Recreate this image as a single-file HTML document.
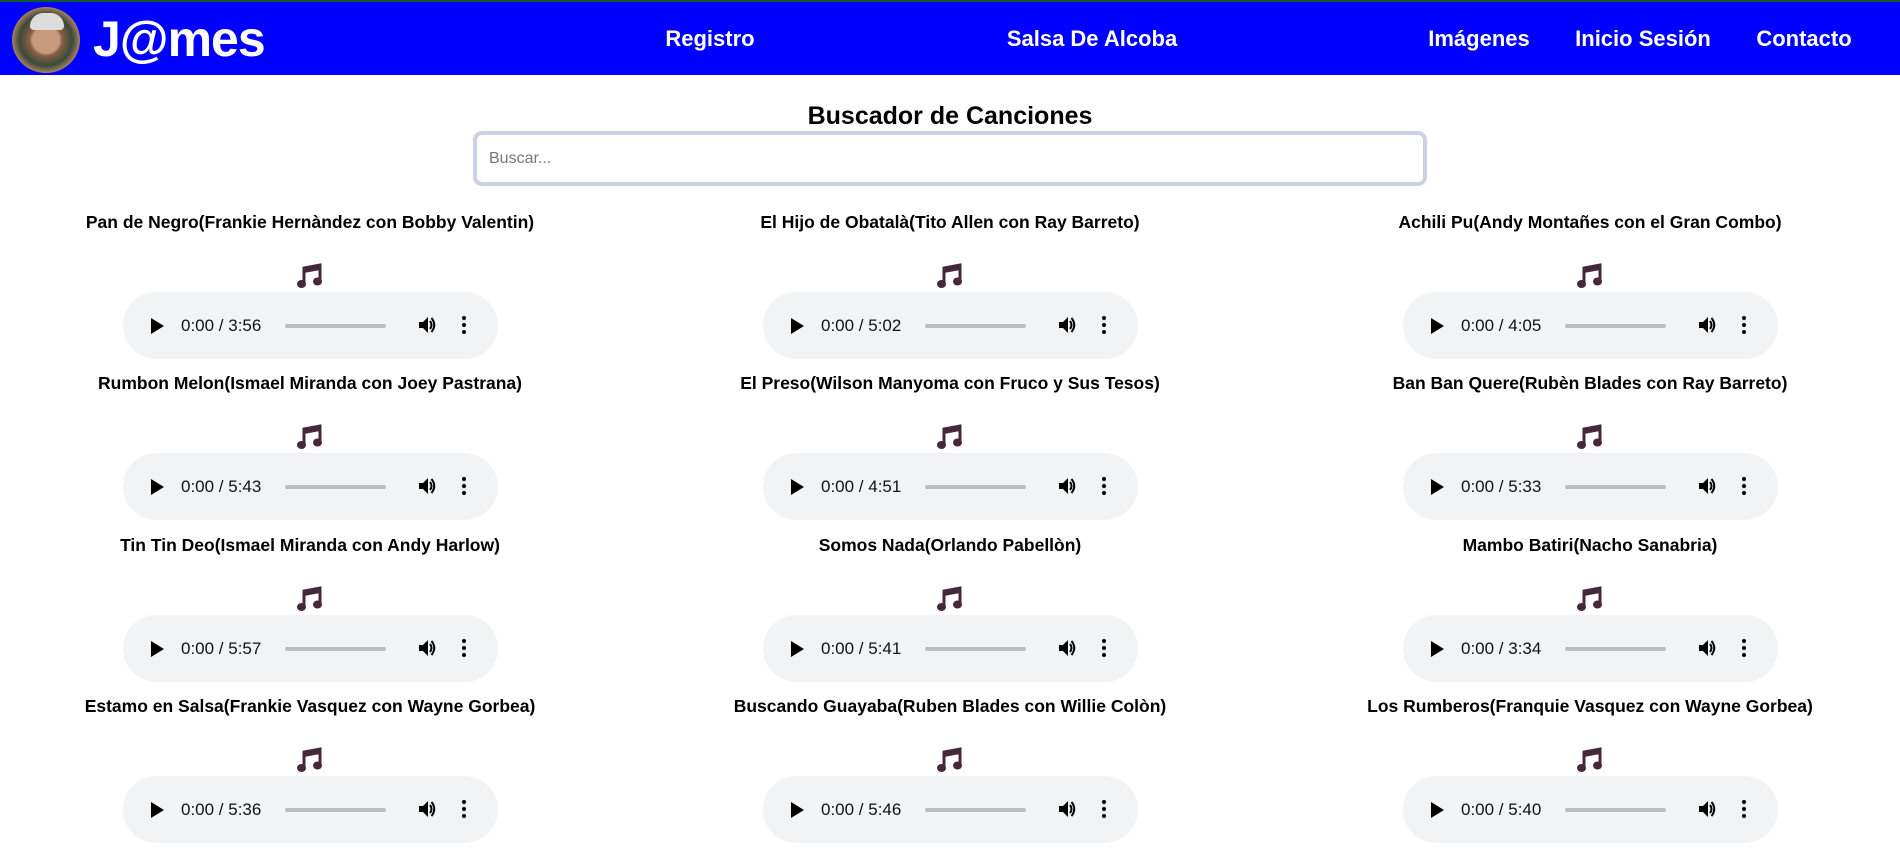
<!DOCTYPE html>
<html><head><meta charset="utf-8">
<style>
*{margin:0;padding:0;box-sizing:border-box}
body{width:1900px;height:854px;overflow:hidden;background:#fff;font-family:"Liberation Sans",Arial,sans-serif;position:relative}
.hdr{position:absolute;left:0;top:0;width:1900px;height:75px;background:#0000ff;border-top:2px solid #0a5a2a}
.av{position:absolute;left:12px;top:5px;width:68px;height:66px;border-radius:50%;background:radial-gradient(ellipse at 50% 50%,#c79a7e 0 28%,#8a5e45 34%,#3a4a3a 55%,#b08660 72%);overflow:hidden}
.av:before{content:"";position:absolute;left:18px;top:6px;width:34px;height:17px;border-radius:14px 14px 4px 4px;background:#ddd}
.logo{position:absolute;left:93px;top:8px;color:#fff;font-weight:bold;font-size:50px;letter-spacing:-1px}
.nav{position:absolute;top:24px;color:#fff;font-weight:bold;font-size:22px;transform:translateX(-50%);white-space:nowrap}
h1{position:absolute;top:102px;left:0;width:1900px;text-align:center;font-size:25px;font-weight:bold;color:#000}
.sb{position:absolute;left:473px;top:131px;width:954px;height:55px;border:4px solid #cdd1e4;border-radius:9px;font-size:16px;color:#777;padding:15px 12px}
.card{position:absolute;width:640px;margin-left:-320px;text-align:center}
.t{font-size:17.5px;font-weight:bold;color:#000;height:20px;white-space:nowrap}
.note{position:absolute;left:307px;top:51px}
.au{position:absolute;top:80px;width:375px;height:67px;border-radius:34px;background:#f1f3f4}
.au .pl{position:absolute;left:28px;top:26px;width:0;height:0;border-left:13px solid #000;border-top:8px solid transparent;border-bottom:8px solid transparent}
.au .tm{position:absolute;left:58px;top:24px;font-size:17px;color:#111}
.au .bar{position:absolute;left:162px;top:32px;width:101px;height:4px;background:#bdbdbd;border-radius:2px}
.au .vol{position:absolute;left:294px;top:23px}
.au .dt{position:absolute;left:339px;top:24px;width:4px}
.au .dt i{display:block;width:4px;height:4px;border-radius:50%;background:#000;margin-bottom:3px}
</style></head><body>
<div class="hdr">
<div class="av"></div>
<div class="logo">J@mes</div>
<div class="nav" style="left:710px">Registro</div>
<div class="nav" style="left:1092px">Salsa De Alcoba</div>
<div class="nav" style="left:1479px">Imágenes</div>
<div class="nav" style="left:1643px">Inicio Sesión</div>
<div class="nav" style="left:1804px">Contacto</div>
</div>
<h1>Buscador de Canciones</h1>
<div class="sb">Buscar...</div>

<div id="c"></div>
<script>
var songs=[
["Pan de Negro(Frankie Hernàndez con Bobby Valentin)","3:56"],
["El Hijo de Obatalà(Tito Allen con Ray Barreto)","5:02"],
["Achili Pu(Andy Montañes con el Gran Combo)","4:05"],
["Rumbon Melon(Ismael Miranda con Joey Pastrana)","5:43"],
["El Preso(Wilson Manyoma con Fruco y Sus Tesos)","4:51"],
["Ban Ban Quere(Rubèn Blades con Ray Barreto)","5:33"],
["Tin Tin Deo(Ismael Miranda con Andy Harlow)","5:57"],
["Somos Nada(Orlando Pabellòn)","5:41"],
["Mambo Batiri(Nacho Sanabria)","3:34"],
["Estamo en Salsa(Frankie Vasquez con Wayne Gorbea)","5:36"],
["Buscando Guayaba(Ruben Blades con Willie Colòn)","5:46"],
["Los Rumberos(Franquie Vasquez con Wayne Gorbea)","5:40"]];
var cx=[310,950,1590],ty=[212,373,535,696],h="";
var note='<svg class="note" width="26" height="26" viewBox="0 0 26 26"><path d="M7 21 V5 L23 2 V18" stroke="#45283a" stroke-width="3" fill="none"/><path d="M7 5 L23 2 V7 L7 10 Z" fill="#45283a"/><ellipse cx="4.5" cy="21" rx="4.5" ry="4" fill="#45283a"/><ellipse cx="20.5" cy="18.5" rx="4.5" ry="4" fill="#45283a"/></svg>';
var vol='<svg width="20" height="20" viewBox="0 0 20 20"><path d="M2 7 H6 L11 2 V18 L6 13 H2 Z" fill="#000"/><path d="M13 6 Q16 10 13 14" stroke="#000" stroke-width="2" fill="none"/><path d="M14.5 3 Q20 10 14.5 17" stroke="#000" stroke-width="2" fill="none"/></svg>';
for(var i=0;i<12;i++){var r=Math.floor(i/3),c=i%3;
h+='<div class="card" style="left:'+cx[c]+'px;top:'+ty[r]+'px"><div class="t">'+songs[i][0]+'</div>'+note+
'<div class="au" style="left:'+(c==0?133:133)+'px"><div class="pl"></div><div class="tm">0:00 / '+songs[i][1]+'</div><div class="bar"></div><div class="vol">'+vol+'</div><div class="dt"><i></i><i></i><i></i></div></div></div>';}
document.getElementById("c").innerHTML=h;
</script>
</body></html>
